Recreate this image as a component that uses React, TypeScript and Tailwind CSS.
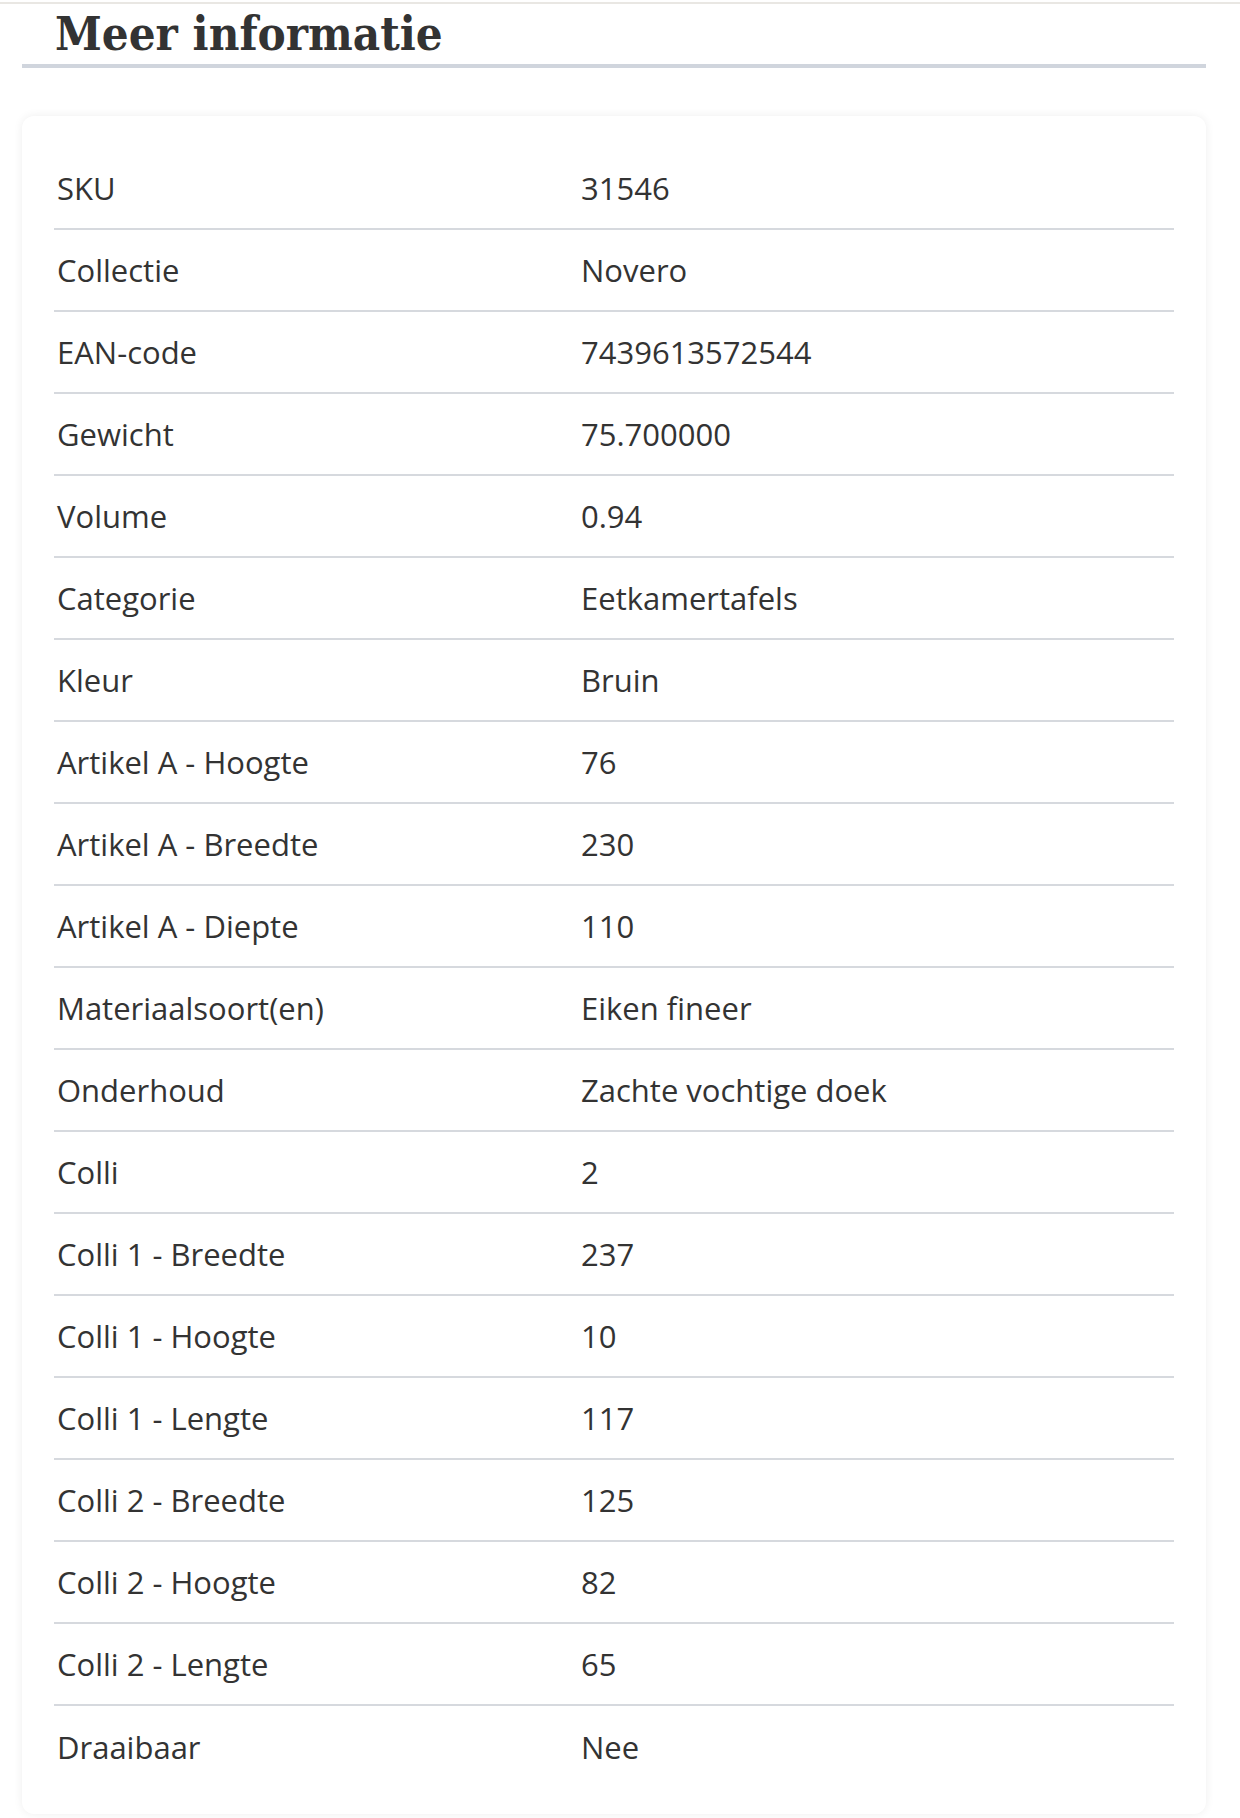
const ROWS: [string, string][] = [
  ['SKU', '31546'],
  ['Collectie', 'Novero'],
  ['EAN-code', '7439613572544'],
  ['Gewicht', '75.700000'],
  ['Volume', '0.94'],
  ['Categorie', 'Eetkamertafels'],
  ['Kleur', 'Bruin'],
  ['Artikel A - Hoogte', '76'],
  ['Artikel A - Breedte', '230'],
  ['Artikel A - Diepte', '110'],
  ['Materiaalsoort(en)', 'Eiken fineer'],
  ['Onderhoud', 'Zachte vochtige doek'],
  ['Colli', '2'],
  ['Colli 1 - Breedte', '237'],
  ['Colli 1 - Hoogte', '10'],
  ['Colli 1 - Lengte', '117'],
  ['Colli 2 - Breedte', '125'],
  ['Colli 2 - Hoogte', '82'],
  ['Colli 2 - Lengte', '65'],
  ['Draaibaar', 'Nee'],
];

export default function App() {
  return (
    <div className="w-[1240px] h-[1818px] overflow-hidden bg-white">
      <div className="mt-[2px] h-[2px] bg-[#e9e7e3]" />
      <div className="ml-[22px] w-[1184px] border-b-4 border-[#d0d5dd] pl-[33px] pt-[2px] pb-[2px]">
        <h2 className="font-['DejaVu_Serif_Condensed','DejaVu_Serif',serif] font-stretch-condensed font-bold text-[47px] leading-[56px] text-[#333]">
          Meer informatie
        </h2>
      </div>
      <div className="ml-[22px] mt-[48px] w-[1184px] rounded-xl bg-white shadow-[0_0_10px_rgba(0,0,0,0.07)] px-[32px] pt-[32px] pb-[26px]">
        <div className="font-['Open_Sans',sans-serif] text-[31px] text-[#333]">
          {ROWS.map(([label, value], i) => (
            <div
              key={label}
              className={`grid grid-cols-[527px_1fr] h-[82px] items-center ${
                i < ROWS.length - 1 ? 'border-b-2 border-[#d6d9de]' : ''
              }`}
            >
              <span className="pl-[3px]">{label}</span>
              <span>{value}</span>
            </div>
          ))}
        </div>
      </div>
    </div>
  );
}
